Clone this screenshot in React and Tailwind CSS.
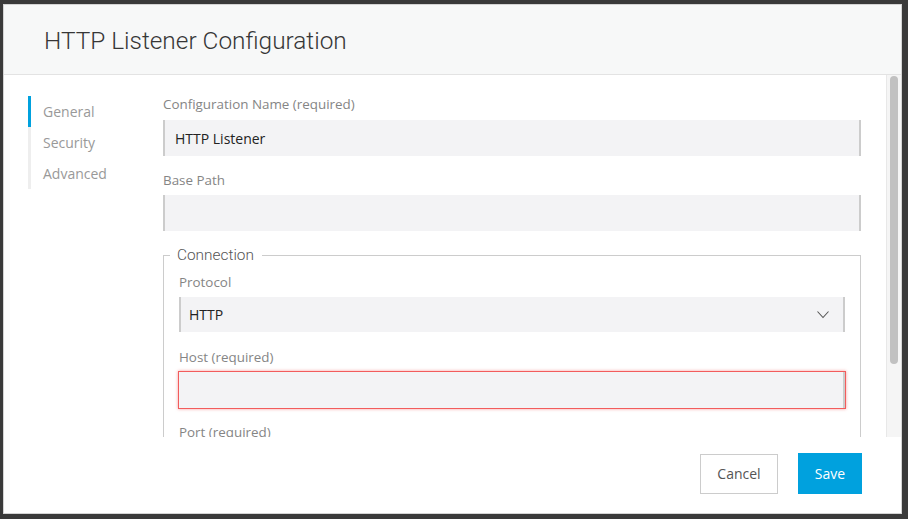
import { useState } from "react";

const navItems = ["General", "Security", "Advanced"];

const Label = ({ children, className = "" }) => (
    <div className={`h-[20px] leading-[20px] text-[13.4px] text-[#858585] ${className}`}>{children}</div>
);

const TextBox = ({ value, className = "" }) => (
    <div
        className={`h-[36px] bg-[#f3f3f5] border-l-2 border-r-2 border-[#cccccc] px-[10px] flex items-center text-[14px] text-[#222] ${className}`}
    >
        {value}
    </div>
);

const App = () => {
    const [active] = useState("General");

    return (
        <div
            className="w-[908px] h-[519px] bg-[#3a3a3a] pt-[4px] pl-[3px] overflow-hidden"
            style={{ fontFamily: '"Open Sans", "Liberation Sans", sans-serif' }}
        >
            <div className="w-[899px] h-[510px] bg-white border border-[#d4d4d4] flex flex-col">
                <div className="h-[70px] shrink-0 bg-[#f7f8f8] border-b border-[#e3e3e3] pl-[40px] flex items-center">
                    <h1
                        className="text-[24.4px] font-light text-[#363636] pt-[3px]"
                        style={{ fontFamily: 'Roboto, "Liberation Sans", sans-serif' }}
                    >
                        HTTP Listener Configuration
                    </h1>
                </div>

                <div className="h-[362px] shrink-0 flex overflow-hidden">
                    <nav className="w-[159px] shrink-0 pl-[24px] pt-[21px]">
                        <ul className="border-l-[3px] border-[#eeeeee]">
                            {navItems.map((item) => (
                                <li
                                    key={item}
                                    className={`h-[31px] leading-[31px] pl-[12px] text-[14px] text-[#999] -ml-[3px] border-l-[3px] ${
                                        item === active ? "border-[#00a1de]" : "border-transparent"
                                    }`}
                                >
                                    {item}
                                </li>
                            ))}
                        </ul>
                    </nav>

                    <div className="flex-1 pt-[94px] -mt-[75px] pr-[25px]">
                        <Label className="mb-[6px]">Configuration Name (required)</Label>
                        <TextBox value="HTTP Listener" />
                        <Label className="mt-[14px] mb-[5px]">Base Path</Label>
                        <TextBox value="" />

                        <fieldset className="mt-[14px] border border-[#cccccc] px-[15px] pb-[20px]">
                            <legend
                                className="-ml-[9px] pl-[7px] pr-[8px] h-[20px] leading-[20px] text-[15.4px] font-light text-[#555]"
                                style={{ fontFamily: 'Roboto, "Liberation Sans", sans-serif' }}
                            >
                                Connection
                            </legend>
                            <Label className="mt-[7px] mb-[5px]">Protocol</Label>
                            <div className="h-[35px] bg-[#f3f3f5] border-l-2 border-r-2 border-[#cccccc] pl-[8px] pr-[14px] flex items-center justify-between text-[14px] text-[#222]">
                                <span>HTTP</span>
                                <svg width="12" height="8" viewBox="0 0 12 8" fill="none">
                                    <polyline points="0.5,0.5 6,6.5 11.5,0.5" stroke="#555" strokeWidth="1.1" />
                                </svg>
                            </div>
                            <Label className="mt-[15px] mb-[4px]">Host (required)</Label>
                            <div className="h-[38px] -mx-[1px] border border-[#f25c5c] shadow-[0_0_3px_rgba(242,92,92,0.6)]">
                                <div className="h-full bg-[#f3f3f5] border-r-2 border-[#cccccc]" />
                            </div>
                            <Label className="mt-[13px]">Port (required)</Label>
                            <TextBox value="" className="mt-[5px]" />
                        </fieldset>
                    </div>

                    <div className="w-[15px] shrink-0 border-l border-[#e8e8e8] bg-[#f5f5f5] pl-[3px] pt-[1px]">
                        <div className="w-[8px] h-[288px] rounded-full bg-[#c1c1c1]" />
                    </div>
                </div>

                <div className="flex-1 flex items-center justify-end gap-[20px] pr-[39px] pb-[3px]">
                    <button className="w-[78px] h-[40px] border border-[#cccccc] bg-white text-[14px] text-[#555]">
                        Cancel
                    </button>
                    <button className="w-[64px] h-[41px] bg-[#00a1de] text-[14px] text-white">Save</button>
                </div>
            </div>
        </div>
    );
};

export default App;
